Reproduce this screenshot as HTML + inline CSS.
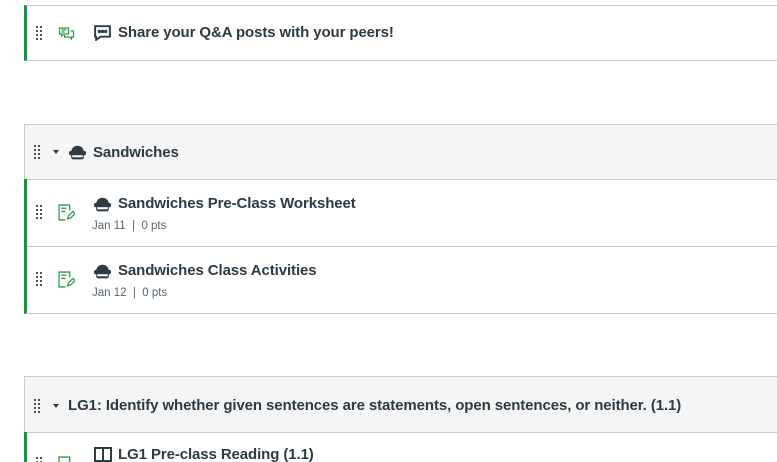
<!DOCTYPE html>
<html style="overflow:hidden"><head><style>
html,body{overflow:hidden;height:462px}
body{margin:0;width:777px;background:#fff;font-family:"Liberation Sans",sans-serif;color:#2d3b45;position:relative}
.b{position:absolute;left:24px;right:-10px;border:1px solid #c7cdd1;box-sizing:border-box}
.hdr{background:#f5f5f5}
.it{border-left:3px solid #0b9a3c;border-top:none}
.grip{position:absolute;left:8px;width:8px;height:16px;background-image:radial-gradient(circle,#3d4a55 1px,transparent 1.3px);background-size:4px 4px}
.t{position:absolute;font-size:15px;font-weight:bold;white-space:nowrap;letter-spacing:-0.1px}
.d{position:absolute;font-size:11.5px;color:#556572;white-space:nowrap}
.ic{position:absolute}
</style></head><body>

<div class="b it" style="top:5px;height:56px;border-top:1px solid #c7cdd1">
 <div class="grip" style="top:19px"></div>
 <svg class="ic" style="left:31px;top:19px" width="17" height="16" viewBox="0 0 16 16" fill="none" stroke="#2b9a4a" stroke-width="1.2"><path d="M1 3h9v6H5l-2 2V9H1z"/><path d="M6 10v2h5l2 2v-2h2V6h-3"/><path d="M3 5h5M3 7h3"/></svg>
 <svg class="ic" style="left:66px;top:18px" width="19" height="17" viewBox="0 0 18 16" fill="none" stroke="#2d3b45" stroke-width="1.8"><path d="M2 2h14v10H7l-4 3v-3H2z"/><circle cx="6" cy="7" r=".7" fill="#2d3b45"/><circle cx="9" cy="7" r=".7" fill="#2d3b45"/><circle cx="12" cy="7" r=".7" fill="#2d3b45"/></svg>
 <div class="t" style="left:91px;top:18px">Share your Q&amp;A posts with your peers!</div>
</div>

<div class="b hdr" style="top:124px;height:56px">
 <div class="grip" style="top:19px"></div>
 <div style="position:absolute;left:28px;top:25px;border-left:3px solid transparent;border-right:3px solid transparent;border-top:4px solid #2d3b45"></div>
 <svg class="ic" style="left:43px;top:17px" width="19" height="19" viewBox="0 0 18 17"><path d="M3 9a6 6 0 0 1 12 0v5a2 2 0 0 1-2 2H5a2 2 0 0 1-2-2z" fill="#2d3b45"/><rect x="1" y="8" width="16" height="4" rx="1.5" fill="#2d3b45"/><rect x="4" y="12" width="10" height="2" fill="#f5f5f5"/></svg>
 <div class="t" style="left:68px;top:19px">Sandwiches</div>
</div>

<div class="b it" style="top:179px;height:68px">
 <div class="grip" style="top:25px"></div>
 <svg class="ic" style="left:31px;top:25px" width="17" height="17" viewBox="0 0 16 16" fill="none" stroke="#2b9a4a" stroke-width="1.2"><path d="M11 6V1H1v14h6"/><path d="M3 4h5M3 7h4"/><path d="M9 14l1-3 4-4 2 2-4 4z"/></svg>
 <svg class="ic" style="left:66px;top:15px" width="19" height="19" viewBox="0 0 18 17"><path d="M3 9a6 6 0 0 1 12 0v5a2 2 0 0 1-2 2H5a2 2 0 0 1-2-2z" fill="#2d3b45"/><rect x="1" y="8" width="16" height="4" rx="1.5" fill="#2d3b45"/><rect x="4" y="12" width="10" height="2" fill="#fff"/></svg>
 <div class="t" style="left:91px;top:16px">Sandwiches Pre-Class Worksheet</div>
 <div class="d" style="left:65px;top:41px">Jan 11 &nbsp;|&nbsp; 0 pts</div>
</div>

<div class="b it" style="top:246px;height:68px">
 <div class="grip" style="top:25px"></div>
 <svg class="ic" style="left:31px;top:25px" width="17" height="17" viewBox="0 0 16 16" fill="none" stroke="#2b9a4a" stroke-width="1.2"><path d="M11 6V1H1v14h6"/><path d="M3 4h5M3 7h4"/><path d="M9 14l1-3 4-4 2 2-4 4z"/></svg>
 <svg class="ic" style="left:66px;top:15px" width="19" height="19" viewBox="0 0 18 17"><path d="M3 9a6 6 0 0 1 12 0v5a2 2 0 0 1-2 2H5a2 2 0 0 1-2-2z" fill="#2d3b45"/><rect x="1" y="8" width="16" height="4" rx="1.5" fill="#2d3b45"/><rect x="4" y="12" width="10" height="2" fill="#fff"/></svg>
 <div class="t" style="left:91px;top:16px">Sandwiches Class Activities</div>
 <div class="d" style="left:65px;top:41px">Jan 12 &nbsp;|&nbsp; 0 pts</div>
</div>

<div class="b hdr" style="top:376px;height:57px">
 <div class="grip" style="top:21px"></div>
 <div style="position:absolute;left:28px;top:27px;border-left:3px solid transparent;border-right:3px solid transparent;border-top:4px solid #2d3b45"></div>
 <div class="t" style="left:43px;top:20px">LG1: Identify whether given sentences are statements, open sentences, or neither. (1.1)</div>
</div>

<div class="b it" style="top:432px;height:30px;border-bottom:none">
 <div class="grip" style="top:24px"></div>
 <svg class="ic" style="left:31px;top:24px" width="17" height="17" viewBox="0 0 16 16" fill="none" stroke="#2b9a4a" stroke-width="1.2"><path d="M11 6V1H1v14h6"/></svg>
 <svg class="ic" style="left:67px;top:14px" width="18" height="16" viewBox="0 0 18 16" fill="none" stroke="#2d3b45" stroke-width="2"><rect x="1" y="2" width="16" height="13"/><path d="M9 2v13"/></svg>
 <div class="t" style="left:91px;top:14px">LG1 Pre-class Reading (1.1)</div>
</div>
</body></html>
